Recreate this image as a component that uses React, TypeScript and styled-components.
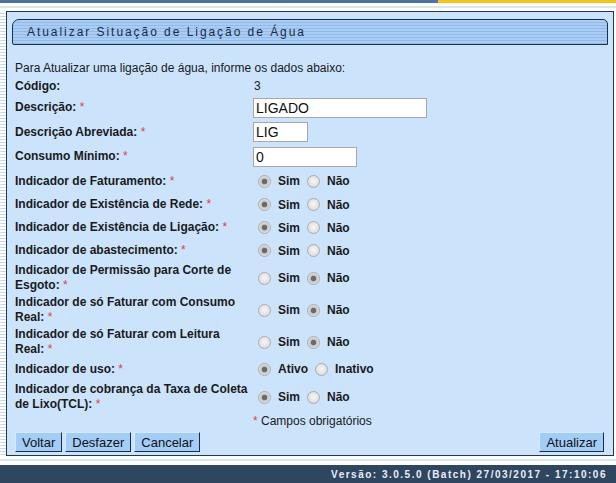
import { createGlobalStyle, styled } from "styled-components";

const GlobalStyle = createGlobalStyle`
    html, body {
        margin: 0;
        padding: 0;
        background: #ffffff;
    }

    body {
        font-family: "Liberation Sans", Arial, sans-serif;
        font-size: 12px;
        color: #111;
    }
`;

const Page = styled.div`
    width: 616px;
    height: 483px;
    display: flex;
    flex-direction: column;
    overflow: hidden;
`;

const TopBar = styled.div`
    height: 3px;
    display: flex;
`;

const TopBlue = styled.div`
    width: 438px;
    background: #4c73a6;
`;

const TopYellow = styled.div`
    flex: 1;
    background: #f6c417;
`;

const Spacer = styled.div<{ $h: number }>`
    height: ${(p) => p.$h}px;
    background: linear-gradient(
        to bottom,
        #ffffff 0 3px,
        #d9e5f3 3px 5px,
        #ffffff 5px
    );
`;

const Body = styled.div`
    display: flex;
    height: 445px;
`;

const LeftStrip = styled.div`
    width: 6px;
    background: repeating-linear-gradient(
        to bottom,
        #ffffff 0 2px,
        #c9d8ec 2px 3px
    );
`;

const Panel = styled.div`
    width: 606px;
    border: 1px solid #22364f;
    background: #cbe3fb;
    padding: 7px 0 3px 0;
    display: flex;
    flex-direction: column;
`;

const TitleBar = styled.div`
    height: 24px;
    margin: 0 5px;
    border: 1px solid #1d3049;
    border-radius: 7px 5px 0 2px;
    background: repeating-linear-gradient(
        to bottom,
        #a9cdf3 0 2px,
        #8fbaea 2px 3px
    );
    display: flex;
    align-items: center;
    padding-left: 14px;
    font-size: 12px;
    letter-spacing: 1.95px;
    color: #1c2c44;
`;

const Form = styled.div`
    margin-top: 14px;
    padding: 0 9px 0 8px;
    display: flex;
    flex-direction: column;
`;

const Row = styled.div<{ $h: number }>`
    height: ${(p) => p.$h}px;
    display: grid;
    grid-template-columns: 238px 1fr;
    align-items: center;
`;

const Intro = styled.div`
    height: 18px;
    display: flex;
    align-items: center;
    color: #1a1a1a;
`;

const Label = styled.div`
    font-weight: bold;
    line-height: 15px;
    color: #1a1a1a;
    padding-right: 4px;
`;

const Req = styled.span`
    color: #e0413b;
    font-weight: normal;
`;

const Value = styled.div`
    padding-left: 1px;
    color: #1a1a1a;
`;

const TextInput = styled.input<{ $w: number }>`
    width: ${(p) => p.$w}px;
    height: 20px;
    box-sizing: border-box;
    border: 1px solid #a8a8a8;
    background: #fff;
    padding: 0 2px;
    font-family: "Liberation Sans", Arial, sans-serif;
    font-size: 14px;
    color: #111;
    outline: none;
`;

const Options = styled.div`
    display: flex;
    align-items: center;
    gap: 7px;
    padding-left: 5px;
`;

const Option = styled.label`
    display: inline-flex;
    align-items: center;
    gap: 7px;
    font-weight: bold;
    color: #1a1a1a;
`;

const Radio = styled.input`
    appearance: none;
    margin: 0;
    width: 13px;
    height: 13px;
    border-radius: 50%;
    border: 1px solid #ababab;
    box-sizing: border-box;
    background: radial-gradient(circle at 50% 45%, #f7f7f7 0, #dedede 70%);

    &:checked {
        background: radial-gradient(
            circle,
            #6a6a6a 0 2.3px,
            #bdbdbd 3px,
            #e4e4e4 5.5px
        );
    }
`;

const Note = styled.div`
    height: 14px;
    display: flex;
    align-items: center;
    padding-left: 238px;
    color: #1a1a1a;
`;

const Buttons = styled.div`
    margin-top: 4px;
    padding: 0 9px 0 8px;
    display: flex;
    gap: 3px;
`;

const Button = styled.button`
    height: 20px;
    padding: 0 6px;
    font-family: "Liberation Sans", Arial, sans-serif;
    font-size: 13px;
    color: #111;
    background: #a2cdf7;
    border: 1px solid;
    border-color: #d6eaff #1b2b48 #1b2b48 #d6eaff;
    cursor: pointer;

    &:last-child {
        margin-left: auto;
    }
`;

const Footer = styled.div`
    height: 18px;
    background: #2e4660;
    display: flex;
    align-items: center;
    justify-content: flex-end;
    padding-right: 9px;
    font-size: 10px;
    font-weight: bold;
    letter-spacing: 1.5px;
    color: #e9eef4;
`;

type RadioRow = {
    label: string;
    h: number;
    name: string;
    options: [string, string];
    checked: 0 | 1;
};

const radioRows: RadioRow[] = [
    { label: "Indicador de Faturamento:", h: 24, name: "fat", options: ["Sim", "Não"], checked: 0 },
    { label: "Indicador de Existência de Rede:", h: 23, name: "rede", options: ["Sim", "Não"], checked: 0 },
    { label: "Indicador de Existência de Ligação:", h: 23, name: "lig", options: ["Sim", "Não"], checked: 0 },
    { label: "Indicador de abastecimento:", h: 23, name: "abast", options: ["Sim", "Não"], checked: 0 },
    { label: "Indicador de Permissão para Corte de Esgoto:", h: 32, name: "corte", options: ["Sim", "Não"], checked: 1 },
    { label: "Indicador de só Faturar com Consumo Real:", h: 32, name: "consumo", options: ["Sim", "Não"], checked: 1 },
    { label: "Indicador de só Faturar com Leitura Real:", h: 32, name: "leitura", options: ["Sim", "Não"], checked: 1 },
    { label: "Indicador de uso:", h: 22, name: "uso", options: ["Ativo", "Inativo"], checked: 0 },
    { label: "Indicador de cobrança da Taxa de Coleta de Lixo(TCL):", h: 34, name: "tcl", options: ["Sim", "Não"], checked: 0 },
];

const App = () => {
    return (
        <Page>
            <GlobalStyle />
            <TopBar>
                <TopBlue />
                <TopYellow />
            </TopBar>
            <Spacer $h={8} />
            <Body>
                <LeftStrip />
                <Panel>
                    <TitleBar>Atualizar Situação de Ligação de Água</TitleBar>
                    <Form>
                        <Intro>Para Atualizar uma ligação de água, informe os dados abaixo:</Intro>
                        <Row $h={18}>
                            <Label>Código:</Label>
                            <Value>3</Value>
                        </Row>
                        <Row $h={25}>
                            <Label>Descrição: <Req>*</Req></Label>
                            <TextInput $w={174} defaultValue="LIGADO" />
                        </Row>
                        <Row $h={24}>
                            <Label>Descrição Abreviada: <Req>*</Req></Label>
                            <TextInput $w={55} defaultValue="LIG" />
                        </Row>
                        <Row $h={25}>
                            <Label>Consumo Mínimo: <Req>*</Req></Label>
                            <TextInput $w={104} defaultValue="0" />
                        </Row>
                        {radioRows.map((r) => (
                            <Row key={r.name} $h={r.h}>
                                <Label>{r.label} <Req>*</Req></Label>
                                <Options>
                                    {r.options.map((o, i) => (
                                        <Option key={o}>
                                            <Radio type="radio" name={r.name} defaultChecked={r.checked === i} />
                                            {o}
                                        </Option>
                                    ))}
                                </Options>
                            </Row>
                        ))}
                        <Note><Req>*</Req>&nbsp;Campos obrigatórios</Note>
                    </Form>
                    <Buttons>
                        <Button>Voltar</Button>
                        <Button>Desfazer</Button>
                        <Button>Cancelar</Button>
                        <Button>Atualizar</Button>
                    </Buttons>
                </Panel>
            </Body>
            <Spacer $h={9} />
            <Footer>Versão: 3.0.5.0 (Batch) 27/03/2017 - 17:10:06</Footer>
        </Page>
    );
};

export default App;
